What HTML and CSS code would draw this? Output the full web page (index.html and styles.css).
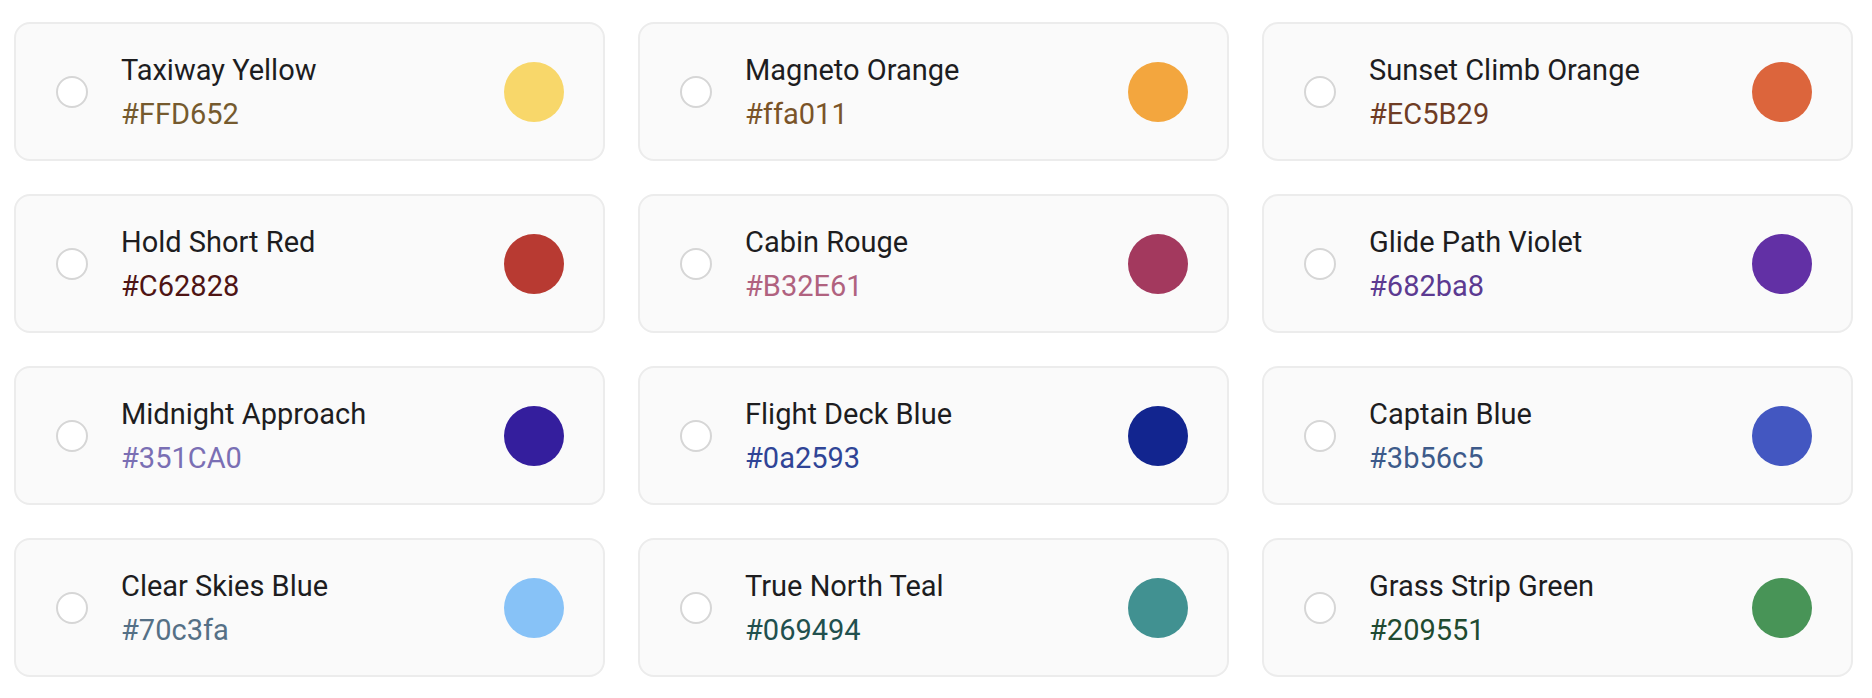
FILE: index.html
```html
<!DOCTYPE html>
<html lang="en">

<head>
    <meta charset="UTF-8">
    <meta name="viewport" content="width=device-width, initial-scale=1.0">
    <title>Livery Colours</title>
    <link rel="stylesheet" href="styles.css">
</head>

<body>
    <main class="swatches">
        <label class="card">
            <input class="pick" type="radio" name="livery">
            <div class="info">
                <div class="name">Taxiway Yellow</div>
                <div class="hex hex-yellow">#FFD652</div>
            </div>
            <span class="dot dot-yellow"></span>
        </label>
        <label class="card">
            <input class="pick" type="radio" name="livery">
            <div class="info">
                <div class="name">Magneto Orange</div>
                <div class="hex hex-orange">#ffa011</div>
            </div>
            <span class="dot dot-orange"></span>
        </label>
        <label class="card">
            <input class="pick" type="radio" name="livery">
            <div class="info">
                <div class="name">Sunset Climb Orange</div>
                <div class="hex hex-sunset">#EC5B29</div>
            </div>
            <span class="dot dot-sunset"></span>
        </label>

        <label class="card">
            <input class="pick" type="radio" name="livery">
            <div class="info">
                <div class="name">Hold Short Red</div>
                <div class="hex hex-red">#C62828</div>
            </div>
            <span class="dot dot-red"></span>
        </label>
        <label class="card">
            <input class="pick" type="radio" name="livery">
            <div class="info">
                <div class="name">Cabin Rouge</div>
                <div class="hex hex-rouge">#B32E61</div>
            </div>
            <span class="dot dot-rouge"></span>
        </label>
        <label class="card">
            <input class="pick" type="radio" name="livery">
            <div class="info">
                <div class="name">Glide Path Violet</div>
                <div class="hex hex-violet">#682ba8</div>
            </div>
            <span class="dot dot-violet"></span>
        </label>

        <label class="card">
            <input class="pick" type="radio" name="livery">
            <div class="info">
                <div class="name">Midnight Approach</div>
                <div class="hex hex-midnight">#351CA0</div>
            </div>
            <span class="dot dot-midnight"></span>
        </label>
        <label class="card">
            <input class="pick" type="radio" name="livery">
            <div class="info">
                <div class="name">Flight Deck Blue</div>
                <div class="hex hex-deck">#0a2593</div>
            </div>
            <span class="dot dot-deck"></span>
        </label>
        <label class="card">
            <input class="pick" type="radio" name="livery">
            <div class="info">
                <div class="name">Captain Blue</div>
                <div class="hex hex-captain">#3b56c5</div>
            </div>
            <span class="dot dot-captain"></span>
        </label>

        <label class="card">
            <input class="pick" type="radio" name="livery">
            <div class="info">
                <div class="name">Clear Skies Blue</div>
                <div class="hex hex-skies">#70c3fa</div>
            </div>
            <span class="dot dot-skies"></span>
        </label>
        <label class="card">
            <input class="pick" type="radio" name="livery">
            <div class="info">
                <div class="name">True North Teal</div>
                <div class="hex hex-teal">#069494</div>
            </div>
            <span class="dot dot-teal"></span>
        </label>
        <label class="card">
            <input class="pick" type="radio" name="livery">
            <div class="info">
                <div class="name">Grass Strip Green</div>
                <div class="hex hex-green">#209551</div>
            </div>
            <span class="dot dot-green"></span>
        </label>
    </main>
</body>

</html>
```

FILE: styles.css
```css
* {
    box-sizing: border-box;
}

body {
    margin: 0;
    background-color: #ffffff;
    font-family: Roboto, 'Liberation Sans', sans-serif;
}

.swatches {
    display: grid;
    grid-template-columns: repeat(3, 1fr);
    column-gap: 33px;
    row-gap: 33px;
    padding: 22px 19px 0 14px;
}

.card {
    display: flex;
    align-items: center;
    height: 139px;
    padding: 0 39px 0 40px;
    background-color: #fafafa;
    border: 2px solid #ececec;
    border-radius: 16px;
    cursor: pointer;
}

.pick {
    appearance: none;
    -webkit-appearance: none;
    flex: none;
    width: 32px;
    height: 32px;
    margin: 0 33px 0 0;
    background-color: #ffffff;
    border: 2px solid #d6d6d6;
    border-radius: 50%;
}

.pick:checked {
    border: 9px solid #3b56c5;
}

.info {
    flex: 1;
    font-size: 29px;
    line-height: 44px;
}

.name {
    color: #1d1d1f;
}

.dot {
    flex: none;
    width: 60px;
    height: 60px;
    border-radius: 50%;
}

/* swatch dots */
.dot-yellow { background-color: #f8d76a; }
.dot-orange { background-color: #f3a63e; }
.dot-sunset { background-color: #dc653c; }
.dot-red { background-color: #b83a32; }
.dot-rouge { background-color: #a3395e; }
.dot-violet { background-color: #6230a5; }
.dot-midnight { background-color: #341e9d; }
.dot-deck { background-color: #12258f; }
.dot-captain { background-color: #4357c1; }
.dot-skies { background-color: #87c2f7; }
.dot-teal { background-color: #419191; }
.dot-green { background-color: #489457; }

/* hex labels */
.hex-yellow { color: #755a2e; }
.hex-orange { color: #7a5428; }
.hex-sunset { color: #6f3c24; }
.hex-red { color: #4e1414; }
.hex-rouge { color: #b0627f; }
.hex-violet { color: #5c3a91; }
.hex-midnight { color: #7a6fb4; }
.hex-deck { color: #2f4496; }
.hex-captain { color: #3d5a8a; }
.hex-skies { color: #557086; }
.hex-teal { color: #21504e; }
.hex-green { color: #204a30; }
```
